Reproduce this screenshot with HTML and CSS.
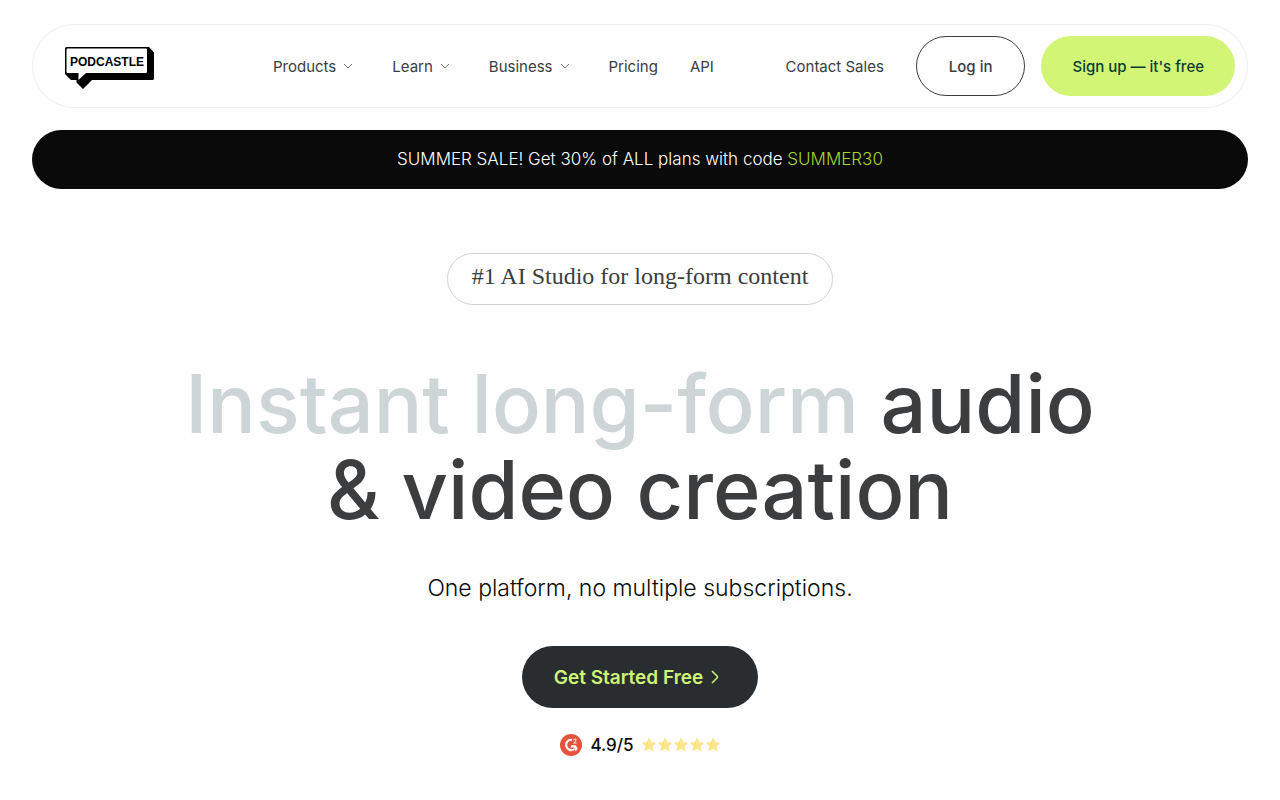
FILE: index.html
```html
<!DOCTYPE html>
<html lang="en">
<head>
  <meta charset="UTF-8">
  <meta name="viewport" content="width=device-width, initial-scale=1.0">
  <title>Podcastle</title>
  <link rel="stylesheet" href="styles.css">
</head>
<body>
  <header class="header">
    <a class="logo" href="#" aria-label="Podcastle home">
      <svg width="90" height="46" viewBox="0 0 90 46">
        <path d="M1.500 4H84L89 9.500V35.500Q89 37 87.500 37H27L18 46L11.500 39.500V37H6L0 31V5.500Q0 4 1.500 4Z" fill="#000"/>
        <path d="M2.500 5.500H81Q82 5.500 82 6.500V28.500Q82 30 81 30H21L13.500 37V30H2.500Q1.500 30 1.500 29V6.500Q1.500 5.500 2.500 5.500Z" fill="#fff"/>
        <text class="logo-text" x="42" y="23" text-anchor="middle">PODCASTLE</text>
      </svg>
    </a>
    <nav class="nav">
      <a href="#">Products<svg class="chevron" viewBox="0 0 24 24"><path d="M8 10l4 4 4-4"/></svg></a>
      <a href="#">Learn<svg class="chevron" viewBox="0 0 24 24"><path d="M8 10l4 4 4-4"/></svg></a>
      <a href="#">Business<svg class="chevron" viewBox="0 0 24 24"><path d="M8 10l4 4 4-4"/></svg></a>
      <a href="#">Pricing</a>
      <a href="#">API</a>
    </nav>
    <div class="actions">
      <a class="contact" href="#">Contact Sales</a>
      <button class="btn btn-login" type="button">Log in</button>
      <button class="btn btn-signup" type="button">Sign up — it's free</button>
    </div>
  </header>

  <div class="banner">
    <p>SUMMER SALE! Get 30% of ALL plans with code <span class="code">SUMMER30</span></p>
  </div>

  <main class="hero">
    <p class="tag">#1 AI Studio for long-form content</p>
    <h1><span class="muted">Instant long-form</span> audio<br>&amp; video creation</h1>
    <p class="subtitle">One platform, no multiple subscriptions.</p>
    <button class="cta" type="button">Get Started Free
      <svg width="8" height="14" viewBox="0 0 8 14"><path d="M1 1l5 5q1 1 0 2l-5 5"/></svg>
    </button>
    <div class="rating">
      <svg width="22" height="22" viewBox="0 0 22 22">
        <circle cx="11" cy="11" r="11" fill="#e8523c"/>
        <path d="M12 5.800A5.200 5.200 0 1 0 14.500 15" fill="none" stroke="#fff" stroke-width="2.200"/>
        <path d="M11.500 11.300H15.700L17.700 14.500L15.700 17.500L14 13.500H10.500Z" fill="#fff"/>
        <path d="M13.500 6.300Q13.700 5 14.900 5Q16.200 5 16.100 6.200Q16 7.100 13.700 9H16.600" fill="none" stroke="#fff"/>
      </svg>
      <span>4.9/5</span>
      <svg width="78" height="16" viewBox="0 0 78 16" fill="#f8e58c" role="img" aria-label="5 stars">
        <defs><path id="star" d="M7 1l2 4.300 4.800.6-3.500 3.300.9 4.800L7 11.700 2.800 14l.9-4.800L.2 5.900 5 5.300z" stroke="#f8e58c" stroke-width=".5" stroke-linejoin="round"/></defs>
        <use href="#star"/>
        <use href="#star" x="16"/>
        <use href="#star" x="32"/>
        <use href="#star" x="48"/>
        <use href="#star" x="64"/>
      </svg>
    </div>
  </main>
</body>
</html>
```

FILE: styles.css
```css
* {
  box-sizing: border-box;
}
body {
  margin: 0;
  padding: 24px 32px;
  background: #fefefe;
  color: #3b3d3f;
  font-family: Inter, "Liberation Sans", sans-serif;
  font-size: 15px;
}
p, h1 {
  margin: 0;
}
a {
  color: inherit;
  text-decoration: none;
}
button {
  font-family: inherit;
  cursor: pointer;
}
.header {
  display: flex;
  align-items: center;
  min-height: 84px;
  padding: 0 12px 0 32px;
  border: 1px solid #efefef;
  border-radius: 42px;
}
.logo svg {
  display: block;
}
.logo-text {
  font-family: "Liberation Sans", Arial, sans-serif;
  font-size: 12px;
  font-weight: 700;
}
.nav {
  display: flex;
  gap: 32px;
  margin-left: 118px;
}
.nav a {
  display: flex;
  align-items: center;
  height: 24px;
}
.chevron {
  width: 24px;
  height: 24px;
  fill: none;
  stroke: #777;
}
.actions {
  display: flex;
  align-items: center;
  gap: 16px;
  margin-left: auto;
}
.contact {
  margin-right: 16px;
}
.btn {
  height: 60px;
  padding: 0 31px;
  border: 0;
  border-radius: 30px;
  font-size: 15px;
  font-weight: 500;
}
.btn-login {
  padding: 0 32px;
  border: 1px solid #3b3d3f;
  background: none;
  color: #3b3d3f;
}
.btn-signup {
  background: #d2f576;
  color: #0a3c32;
}
.banner {
  margin-top: 22px;
  padding: 18px;
  border-radius: 30px;
  background: #090a09;
  color: #fff;
  font-size: 17px;
  font-weight: 300;
  line-height: 23px;
  text-align: center;
}
.code {
  color: #a8d52f;
}
.hero {
  display: flex;
  flex-direction: column;
  align-items: center;
  padding-top: 64px;
  text-align: center;
}
.tag {
  min-height: 52px;
  padding: 6px 24px;
  border: 1px solid #d0d3d4;
  border-radius: 26px;
  font-family: "Liberation Serif", serif;
  font-size: 24px;
  line-height: 32px;
}
h1 {
  margin-top: 56px;
  font-size: 81px;
  font-weight: 500;
  line-height: 86px;
}
.muted {
  color: #ced5d7;
}
.subtitle {
  margin-top: 38px;
  color: #090a09;
  font-size: 23px;
  font-weight: 300;
  line-height: 34px;
}
.cta {
  display: flex;
  align-items: center;
  gap: 8px;
  height: 62px;
  margin-top: 41px;
  padding: 0 39px 0 32px;
  border: 0;
  border-radius: 31px;
  background: #2a2d30;
  color: #cdf576;
  font-size: 19px;
  font-weight: 600;
}
.cta svg {
  fill: none;
  stroke: #cdf576;
  stroke-width: 1.5;
}
.rating {
  display: flex;
  align-items: center;
  gap: 8px;
  margin-top: 25px;
  color: #090a09;
  font-size: 17px;
  font-weight: 500;
  line-height: 24px;
}
```
